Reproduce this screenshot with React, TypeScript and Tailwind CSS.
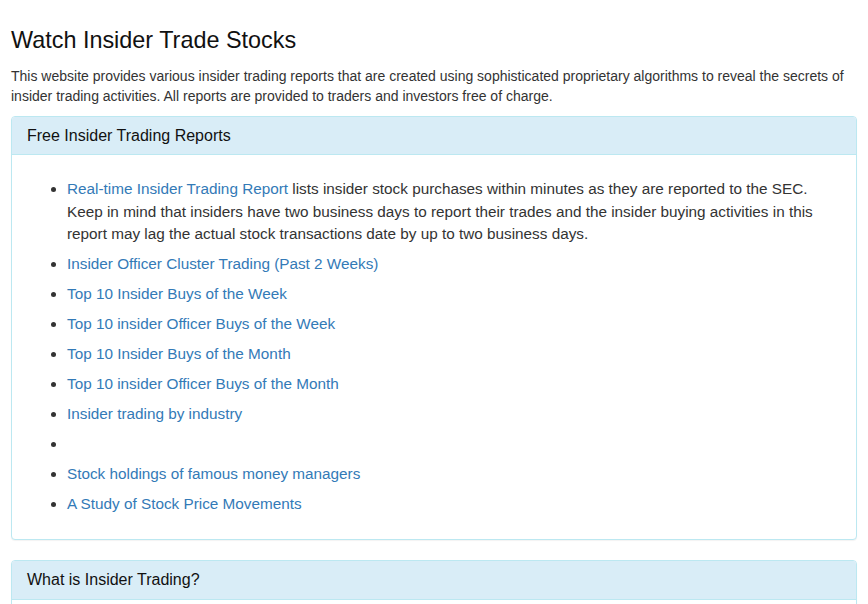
export default function App() {
  const links = [
    'Insider Officer Cluster Trading (Past 2 Weeks)',
    'Top 10 Insider Buys of the Week',
    'Top 10 insider Officer Buys of the Week',
    'Top 10 Insider Buys of the Month',
    'Top 10 insider Officer Buys of the Month',
    'Insider trading by industry',
    '',
    'Stock holdings of famous money managers',
    'A Study of Stock Price Movements',
  ];

  return (
    <div className="min-h-screen bg-white px-[11px] pt-[28px] text-[14px] leading-[20px] text-[#333] font-['Liberation_Sans',Arial,sans-serif]">
      <h3 className="text-[23.4px] leading-[1.1] text-[#111] mb-[12px]">Watch Insider Trade Stocks</h3>
      <p className="mb-[10px]">
        This website provides various insider trading reports that are created using sophisticated proprietary algorithms to
        reveal the secrets of insider trading activities. All reports are provided to traders and investors free of charge.
      </p>

      <div className="mb-[20px] rounded-[4px] border border-[#bce8f1] bg-white shadow-[0_1px_1px_rgba(0,0,0,0.05)]">
        <div className="rounded-t-[3px] border-b border-[#bce8f1] bg-[#d9edf7] px-[15px] py-[10px]">
          <h4 className="text-[16px] leading-[1.1] text-[#111]">Free Insider Trading Reports</h4>
        </div>
        <div className="px-[15px] pt-[23px] pb-[16px]">
          <ul className="list-disc pl-[40px] text-[15.3px] leading-[22.5px]">
            <li className="mb-[7.5px]">
              <a href="#" className="text-[#337ab7]">Real-time Insider Trading Report</a> lists insider stock purchases within
              minutes as they are reported to the SEC. Keep in mind that insiders have two business days to report their trades
              and the insider buying activities in this report may lag the actual stock transactions date by up to two business
              days.
            </li>
            {links.map((l, i) => (
              <li key={i} className="mb-[7.5px] min-h-[22.5px]">
                {l && (
                  <a href="#" className="text-[#337ab7]">
                    {l}
                  </a>
                )}
              </li>
            ))}
          </ul>
        </div>
      </div>

      <div className="mb-[20px] rounded-[4px] border border-[#bce8f1] bg-white shadow-[0_1px_1px_rgba(0,0,0,0.05)]">
        <div className="rounded-t-[3px] border-b border-[#bce8f1] bg-[#d9edf7] px-[15px] py-[10px]">
          <h4 className="text-[16px] leading-[1.1] text-[#111]">What is Insider Trading?</h4>
        </div>
        <div className="p-[15px] text-[15px] leading-[22.5px]">
          Insider trading is the buying or selling of a security by someone who has access to material, nonpublic information
          about the security.
        </div>
      </div>
    </div>
  );
}
